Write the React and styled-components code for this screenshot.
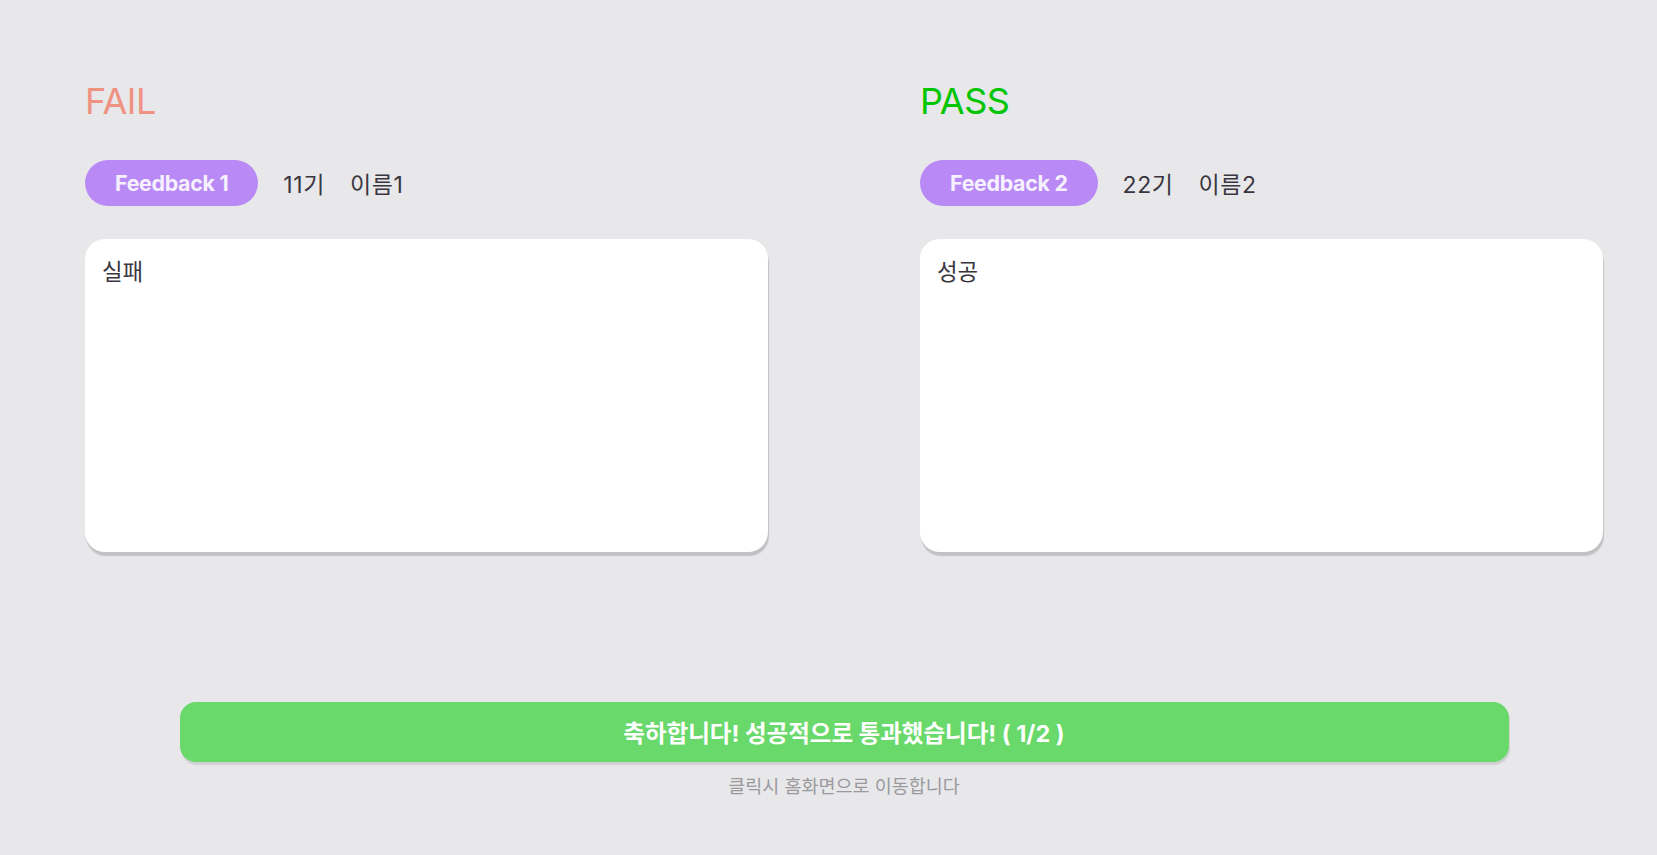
import styled, { createGlobalStyle } from "styled-components";

const GlobalStyle = createGlobalStyle`
  body {
    margin: 0;
    background: #e8e8eb;
    font-family: Inter, "Noto Sans CJK KR", sans-serif;
  }
`;

const Page = styled.main`
  padding: 79px 54px 40px 85px;
  display: flex;
  flex-direction: column;
`;

const Columns = styled.div`
  display: grid;
  grid-template-columns: 683px 683px;
  column-gap: 152px;
`;

const Column = styled.section`
  display: flex;
  flex-direction: column;
`;

const Title = styled.h2`
  margin: 0;
  font-size: 36px;
  line-height: 44px;
  font-weight: 400;
  letter-spacing: -0.5px;
  color: ${(p) => (p.$pass ? "#03c503" : "#ef9282")};
`;

const InfoRow = styled.div`
  display: flex;
  align-items: center;
  gap: 25px;
  margin-top: 37px;
  height: 46px;
  color: #3a3640;
`;

const Pill = styled.span`
  display: inline-flex;
  align-items: center;
  justify-content: center;
  height: 46px;
  padding: 0 30px;
  border-radius: 23px;
  background: #b98af6;
  color: #f6f1fe;
  font-weight: 700;
  font-size: 21.4px;
  letter-spacing: -0.3px;
`;

const Meta = styled.span`
  font-size: 23px;
  letter-spacing: 0.6px;
`;

const Card = styled.div`
  margin-top: 33px;
  height: 313px;
  box-sizing: border-box;
  padding: 18px 17px;
  background: #fff;
  border-radius: 20px;
  box-shadow: 1px 4px 1px rgba(0, 0, 0, 0.16);
  font-size: 22.4px;
  line-height: 30px;
  color: #3a3640;
`;

const Footer = styled.div`
  margin-top: 150px;
  display: flex;
  flex-direction: column;
  align-items: center;
`;

const HomeButton = styled.button`
  width: 1329px;
  height: 60px;
  border: none;
  border-radius: 16px;
  background: #68d96a;
  box-shadow: 1px 3px 1px rgba(0, 0, 0, 0.1);
  color: #fff;
  font-family: inherit;
  font-size: 23.5px;
  font-weight: 700;
  cursor: pointer;
`;

const Hint = styled.p`
  margin: 11px 0 0;
  font-size: 18.5px;
  line-height: 26px;
  color: #9a9a9e;
`;

const results = [
  { label: "FAIL", pass: false, feedback: "Feedback 1", gen: "11기", name: "이름1", text: "실패" },
  { label: "PASS", pass: true, feedback: "Feedback 2", gen: "22기", name: "이름2", text: "성공" },
];

export default function App() {
  return (
    <>
      <GlobalStyle />
      <Page>
        <Columns>
          {results.map((r) => (
            <Column key={r.label}>
              <Title $pass={r.pass}>{r.label}</Title>
              <InfoRow>
                <Pill>{r.feedback}</Pill>
                <Meta>{r.gen}</Meta>
                <Meta>{r.name}</Meta>
              </InfoRow>
              <Card>{r.text}</Card>
            </Column>
          ))}
        </Columns>
        <Footer>
          <HomeButton>축하합니다! 성공적으로 통과했습니다! ( 1/2 )</HomeButton>
          <Hint>클릭시 홈화면으로 이동합니다</Hint>
        </Footer>
      </Page>
    </>
  );
}
